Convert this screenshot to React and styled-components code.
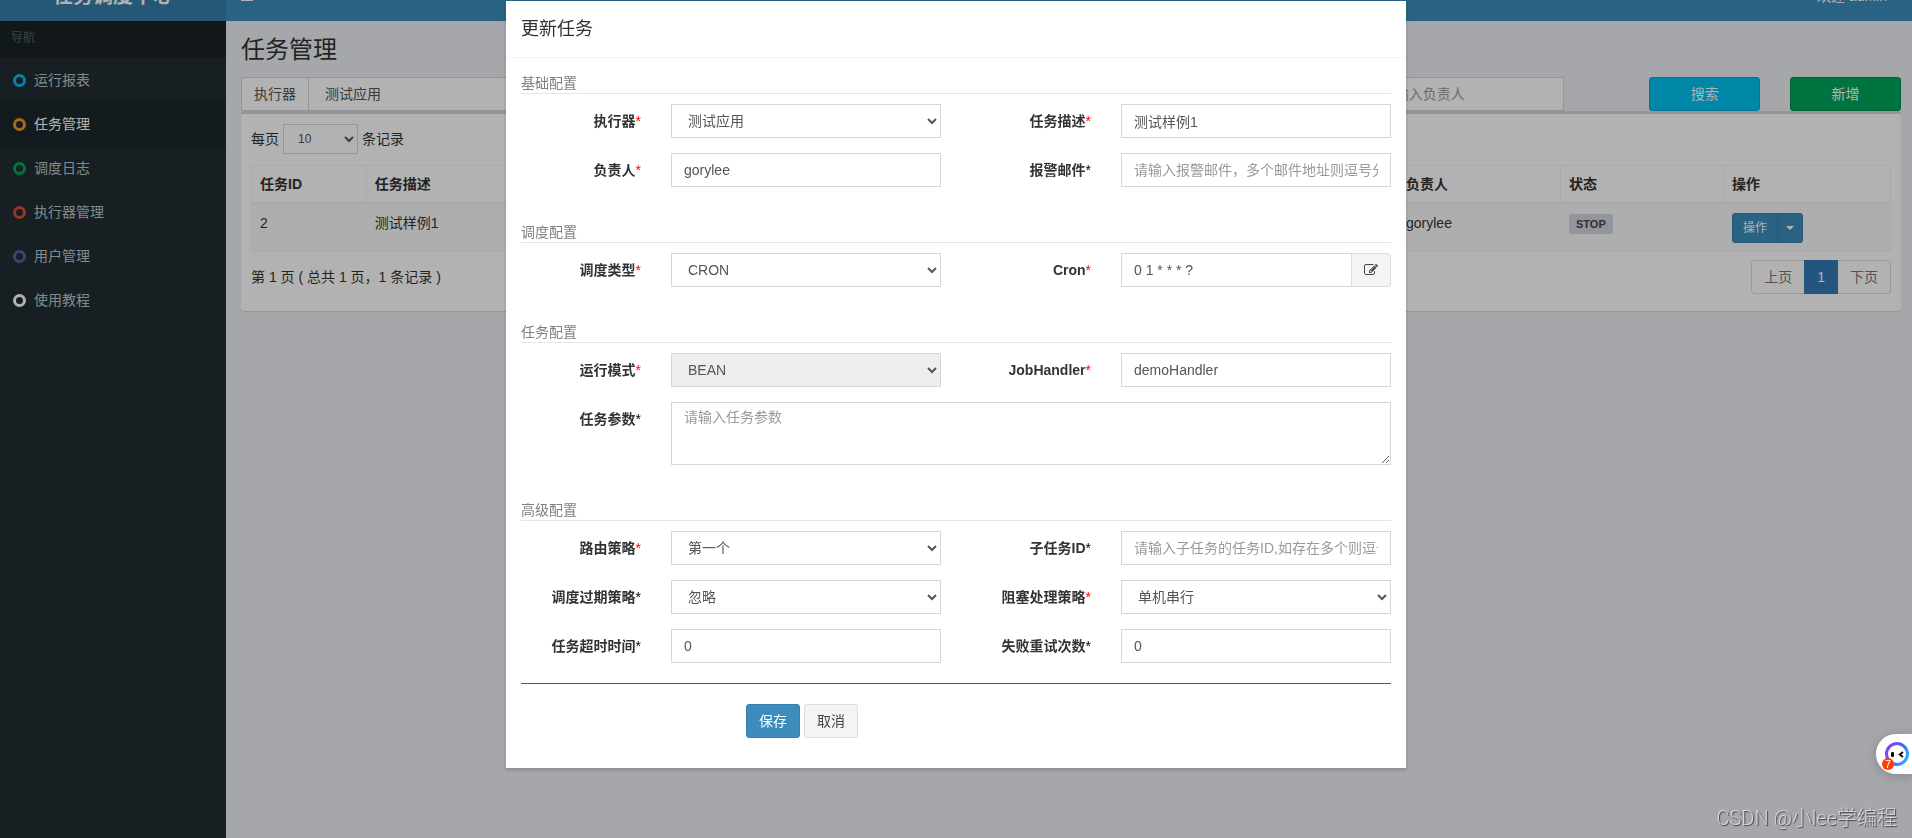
/**
*
* JobInfo
*
*/

import React from 'react';
import styled, { createGlobalStyle } from 'styled-components';

const GlobalStyle = createGlobalStyle`
  *, *::before, *::after {
    box-sizing: border-box;
  }

  body {
    margin: 0;
    color: #333;
    background: #ecf0f5;
    font-family: "Liberation Sans", "Noto Sans CJK SC", sans-serif;
    font-size: 14px;
    line-height: 20px;
  }

  button, input, select, textarea {
    font: inherit;
  }
`;

const Page = styled.div`
  display: flex;
  flex-direction: column;
  min-height: 100vh;
`;

const Header = styled.header`
  display: flex;
  align-items: flex-end;
  height: 21px;
  overflow: hidden;
  background: #3c8dbc;
  color: #fff;
`;

const Logo = styled.a`
  width: 226px;
  background: #367fa9;
  color: #fff;
  font-size: 20px;
  font-weight: bold;
  line-height: 50px;
  text-align: center;
  text-decoration: none;
`;

const Navbar = styled.div`
  display: flex;
  flex: 1;
  align-items: center;
  justify-content: space-between;
  height: 50px;
  padding: 0 25px 0 15px;
`;

const MenuToggle = styled.button`
  display: flex;
  padding: 0;
  border: 0;
  background: none;
  color: #fff;
`;

const Body = styled.div`
  display: flex;
  flex: 1;
`;

const Sidebar = styled.aside`
  width: 226px;
  background: #222d32;
`;

const NavTitle = styled.div`
  padding: 9px 11px 12px;
  background: #1a2226;
  color: #4b646f;
  font-size: 12px;
  line-height: 16px;
`;

const NavItem = styled.a`
  display: flex;
  align-items: center;
  gap: 8px;
  height: 44px;
  padding: 0 13px;
  background: ${(props) => (props.$active ? '#1e282c' : 'transparent')};
  color: ${(props) => (props.$active ? '#fff' : '#b8c7ce')};
  text-decoration: none;
`;

const Ring = styled.i`
  width: 13px;
  height: 13px;
  border: 3px solid ${(props) => props.$color};
  border-radius: 50%;
`;

const Content = styled.main`
  flex: 1;
  min-width: 0;
  padding: 15px 11px 15px 15px;
`;

const PageTitle = styled.h1`
  margin: 0 0 14px;
  font-size: 24px;
  font-weight: normal;
  line-height: 27px;
`;

const Filters = styled.div`
  display: grid;
  grid-template-columns: repeat(12, minmax(0, 1fr));
  column-gap: 30px;
`;

const FilterCell = styled.div`
  display: flex;
  grid-column: span ${(props) => props.$span};
`;

const Addon = styled.label`
  flex: none;
  padding: 6px 12px;
  border: 1px solid #d2d6de;
  border-right: 0;
  background: #fff;
  color: #555;
`;

const Input = styled.input`
  flex: 1;
  width: 100%;
  min-width: 0;
  max-width: ${(props) => props.$max || 'none'};
  height: 34px;
  padding: 6px 12px;
  border: 1px solid #d2d6de;
  border-radius: 0;
  background: #fff;
  color: #555;
  outline: 0;

  &::placeholder {
    color: #999;
    opacity: 1;
  }
`;

const Select = styled.select`
  width: ${(props) => props.$width || '100%'};
  min-width: 0;
  height: ${(props) => (props.$small ? '30px' : '34px')};
  padding: ${(props) => (props.$small ? '5px 10px' : '6px 12px')};
  border: 1px solid #d2d6de;
  border-radius: 0;
  background: #fff;
  color: #555;
  font-size: ${(props) => (props.$small ? '12px' : '14px')};

  &:disabled {
    background: #eee;
    opacity: 1;
  }
`;

const Textarea = styled.textarea`
  display: block;
  grid-column: span 10;
  width: 100%;
  height: 63px;
  padding: 4px 12px;
  border: 1px solid #d2d6de;
  background: #fff;
  color: #555;
  line-height: 20px;

  &::placeholder {
    color: #999;
    opacity: 1;
  }
`;

const themes = {
  primary: ['#3c8dbc', '#367fa9', '#fff'],
  info: ['#00c0ef', '#00acd6', '#fff'],
  success: ['#00a65a', '#008d4c', '#fff'],
  plain: ['#f4f4f4', '#ddd', '#444'],
};

const Button = styled.button`
  width: ${(props) => (props.$block ? '100%' : 'auto')};
  height: ${(props) => (props.$small ? '30px' : '34px')};
  padding: 0 ${(props) => (props.$small ? '10px' : '12px')};
  border: 1px solid ${(props) => themes[props.$theme][1]};
  border-radius: 3px;
  background: ${(props) => themes[props.$theme][0]};
  color: ${(props) => themes[props.$theme][2]};
  font-size: ${(props) => (props.$small ? '12px' : '14px')};
`;

const ButtonGroup = styled.div`
  display: flex;

  & > :first-child {
    border-top-right-radius: 0;
    border-bottom-right-radius: 0;
  }

  & > :last-child:not(:first-child) {
    margin-left: -1px;
    padding: 0 8px;
    border-top-left-radius: 0;
    border-bottom-left-radius: 0;
  }
`;

const Caret = styled.span`
  display: block;
  border-top: 4px solid #fff;
  border-right: 4px solid transparent;
  border-left: 4px solid transparent;
`;

const Box = styled.section`
  padding: 10px;
  border-top: 3px solid #d2d6de;
  border-radius: 3px;
  background: #fff;
  box-shadow: 0 1px 1px rgba(0, 0, 0, 0.1);
`;

const PageLength = styled.label`
  display: flex;
  align-items: center;
  gap: 4px;
  margin-bottom: 11px;
`;

const Table = styled.table`
  width: 100%;
  border-spacing: 0;
  border: solid #f4f4f4;
  border-width: 1px 0 0 1px;
  table-layout: fixed;

  th, td {
    padding: 8px;
    border: solid #f4f4f4;
    border-width: 0 1px 1px 0;
    text-align: left;
    vertical-align: top;
  }

  th {
    border-bottom-width: 3px;
  }

  td {
    background: #f9f9f9;
  }
`;

const Status = styled.span`
  display: inline-block;
  padding: 0 7px;
  border-radius: 3px;
  background: #d2d6de;
  color: #444;
  font-size: 11px;
  font-weight: bold;
  line-height: 20px;
`;

const BoxFooter = styled.div`
  display: flex;
  justify-content: space-between;
  padding: 8px 0 7px;
  line-height: 34px;
`;

const Pagination = styled.nav`
  display: flex;
`;

const PageLink = styled.a`
  padding: 6px 12px;
  border: 1px solid ${(props) => (props.$active ? '#337ab7' : '#ddd')};
  border-width: ${(props) => (props.$active ? '1px' : props.$edge)};
  border-radius: ${(props) => props.$radius || '0'};
  background: ${(props) => (props.$active ? '#337ab7' : '#fff')};
  color: ${(props) => (props.$active ? '#fff' : '#777')};
  line-height: 20px;
  text-decoration: none;
`;

const Backdrop = styled.div`
  position: fixed;
  inset: 0;
  display: flex;
  align-items: flex-start;
  justify-content: center;
  padding-top: 1px;
  overflow: auto;
  background: rgba(0, 0, 0, 0.3);
`;

const Dialog = styled.div`
  width: 900px;
  max-width: 100%;
  background: #fff;
  box-shadow: 0 2px 4px rgba(0, 0, 0, 0.2);
`;

const DialogTitle = styled.h4`
  margin: 0;
  padding: 15px;
  border-bottom: 1px solid #f4f4f4;
  font-size: 18px;
  font-weight: normal;
  line-height: 26px;
`;

const Form = styled.form`
  display: flex;
  flex-direction: column;
  gap: 35px;
  padding: 15px 15px 30px;
`;

const Section = styled.fieldset`
  display: flex;
  flex-direction: column;
  min-width: 0;
  margin: 0;
  padding: 0;
  border: 0;
`;

const SectionTitle = styled.div`
  margin-bottom: 10px;
  border-bottom: 1px solid #e5e5e5;
  color: #808080;
`;

const Grid = styled.div`
  display: grid;
  grid-template-columns: repeat(12, minmax(0, 1fr));
  gap: 15px 30px;
`;

const Label = styled.label`
  grid-column: span 2;
  padding-top: 7px;
  font-weight: bold;
  text-align: right;
  white-space: nowrap;
`;

const Star = styled.span`
  color: ${(props) => (props.$required ? 'red' : '#000')};
  font-weight: normal;
`;

const Control = styled.div`
  display: flex;
  grid-column: span 4;
`;

const CronButton = styled.button`
  display: flex;
  align-items: center;
  width: 40px;
  height: 34px;
  margin-left: -1px;
  padding: 0 12px;
  border: 1px solid #ddd;
  border-radius: 0 3px 3px 0;
  background: #f4f4f4;
  color: #444;
`;

const Actions = styled.div`
  display: flex;
  gap: 4px;
  grid-column: 4 / -1;
`;

const FormFooter = styled.div`
  margin-top: -15px;
  padding-top: 20px;
  border-top: 1px solid #555;
`;

const Assistant = styled.button`
  position: fixed;
  right: 0;
  bottom: 64px;
  width: 36px;
  height: 40px;
  padding: 0;
  border: 0;
  border-radius: 20px 0 0 20px;
  background: #fff;
  box-shadow: 0 2px 12px rgba(0, 0, 0, 0.2);
`;

const Watermark = styled.div`
  position: fixed;
  right: 15px;
  bottom: 8px;
  color: rgba(255, 255, 255, 0.6);
  font-family: Roboto, "Noto Sans CJK SC", sans-serif;
  font-size: 20px;
  font-weight: 300;
  line-height: 24px;
  text-shadow: 1px 1px 1px rgba(0, 0, 0, 0.6);
`;

const navItems = [
  { text: '运行报表', color: '#00c0ef' },
  { text: '任务管理', color: '#f39c12', active: true },
  { text: '调度日志', color: '#00a65a' },
  { text: '执行器管理', color: '#dd4b39' },
  { text: '用户管理', color: '#605ca8' },
  { text: '使用教程', color: '#fff' },
];

const sections = [
  {
    title: '基础配置',
    fields: [
      { id: 'jobGroup', label: '执行器', required: true, options: ['测试应用'] },
      { id: 'jobDesc', label: '任务描述', required: true, value: '测试样例1' },
      { id: 'author', label: '负责人', required: true, value: 'gorylee' },
      { id: 'alarmEmail', label: '报警邮件', placeholder: '请输入报警邮件，多个邮件地址则逗号分隔' },
    ],
  },
  {
    title: '调度配置',
    fields: [
      { id: 'scheduleType', label: '调度类型', required: true, options: ['CRON'] },
      { id: 'cron', label: 'Cron', required: true, value: '0 1 * * * ?', cron: true },
    ],
  },
  {
    title: '任务配置',
    fields: [
      { id: 'glueType', label: '运行模式', required: true, options: ['BEAN'], disabled: true },
      { id: 'handler', label: 'JobHandler', required: true, value: 'demoHandler' },
      { id: 'param', label: '任务参数', placeholder: '请输入任务参数', multiline: true },
    ],
  },
  {
    title: '高级配置',
    fields: [
      { id: 'route', label: '路由策略', required: true, options: ['第一个'] },
      { id: 'childJobId', label: '子任务ID', placeholder: '请输入子任务的任务ID,如存在多个则逗号分隔' },
      { id: 'misfire', label: '调度过期策略', options: ['忽略'] },
      { id: 'block', label: '阻塞处理策略', required: true, options: ['单机串行'] },
      { id: 'timeout', label: '任务超时时间', value: '0' },
      { id: 'retry', label: '失败重试次数', value: '0' },
    ],
  },
];

function BarsIcon() {
  return (
    <svg width="12" height="12" viewBox="0 0 12 12" fill="currentColor" aria-hidden="true">
      <path d="M0 1h12v2H0zM0 5h12v2H0zM0 9h12v2H0z" />
    </svg>
  );
}

function EditIcon() {
  return (
    <svg width="14" height="14" viewBox="0 0 1792 1792" fill="currentColor" aria-hidden="true">
      <path d="M888 1184l116-116-152-152-116 116v56h96v96h56zm440-720q-16-16-33 1l-350 350q-17 17-1 33t33-1l350-350q17-17 1-33zm80 594v190q0 119-84.5 203.5t-203.5 84.5h-832q-119 0-203.5-84.5t-84.5-203.5v-832q0-119 84.5-203.5t203.5-84.5h832q63 0 117 25 15 7 18 23 3 17-9 29l-49 49q-14 14-32 8-23-6-45-6h-832q-66 0-113 47t-47 113v832q0 66 47 113t113 47h832q66 0 113-47t47-113v-126q0-13 9-22l64-64q15-15 35-7t20 29zm-96-738l288 288-672 672h-288v-288zm444 132l-92 92-288-288 92-92q28-28 68-28t68 28l152 152q28 28 28 68t-28 68z" />
    </svg>
  );
}

function AssistantIcon() {
  return (
    <svg width="36" height="40" viewBox="0 0 36 40" aria-hidden="true">
      <defs>
        <linearGradient id="face" x1="0" y1="0.3" x2="1" y2="0.8">
          <stop offset="0" stopColor="#8a3ff5" />
          <stop offset="0.5" stopColor="#4a5cff" />
          <stop offset="1" stopColor="#2cb4f5" />
        </linearGradient>
      </defs>
      <circle cx="21" cy="20" r="10.5" fill="#fff" stroke="url(#face)" strokeWidth="3" />
      <rect x="15" y="18" width="3" height="5" rx="1" fill="#111" />
      <path d="M27 18l-3.2 2.5L27 23" fill="none" stroke="#111" strokeWidth="2" />
      <circle cx="12" cy="30" r="6" fill="#ff3d00" />
      <text x="12" y="34" fill="#fff" fontSize="11" textAnchor="middle">7</text>
    </svg>
  );
}

function Field({ field }) {
  let control = <Input id={field.id} defaultValue={field.value} placeholder={field.placeholder} />;
  if (field.options) {
    control = (
      <Select id={field.id} disabled={field.disabled}>
        {field.options.map((option) => <option key={option}>{option}</option>)}
      </Select>
    );
  }
  return (
    <>
      <Label htmlFor={field.id}>{field.label}<Star $required={field.required}>*</Star></Label>
      {field.multiline ? (
        <Textarea id={field.id} placeholder={field.placeholder} />
      ) : (
        <Control>
          {control}
          {field.cron && <CronButton type="button" aria-label="Cron"><EditIcon /></CronButton>}
        </Control>
      )}
    </>
  );
}

function JobTable() {
  return (
    <Table>
      <colgroup>
        <col width="7%" />
        <col width="25%" />
        <col width="13%" />
        <col />
        <col width="163" />
        <col width="163" />
        <col width="167" />
      </colgroup>
      <thead>
        <tr>
          <th>任务ID</th>
          <th>任务描述</th>
          <th>调度类型</th>
          <th>运行模式</th>
          <th>负责人</th>
          <th>状态</th>
          <th>操作</th>
        </tr>
      </thead>
      <tbody>
        <tr>
          <td>2</td>
          <td>测试样例1</td>
          <td>CRON</td>
          <td>BEAN</td>
          <td>gorylee</td>
          <td><Status>STOP</Status></td>
          <td>
            <ButtonGroup>
              <Button type="button" $theme="primary" $small>操作</Button>
              <Button type="button" $theme="primary" $small aria-label="操作"><Caret /></Button>
            </ButtonGroup>
          </td>
        </tr>
      </tbody>
    </Table>
  );
}

function UpdateDialog() {
  return (
    <Dialog role="dialog" aria-labelledby="dialogTitle">
      <DialogTitle id="dialogTitle">更新任务</DialogTitle>
      <Form>
        {sections.map((section) => (
          <Section key={section.title}>
            <SectionTitle>{section.title}</SectionTitle>
            <Grid>
              {section.fields.map((field) => <Field key={field.id} field={field} />)}
            </Grid>
          </Section>
        ))}
        <FormFooter>
          <Grid>
            <Actions>
              <Button type="button" $theme="primary">保存</Button>
              <Button type="button" $theme="plain">取消</Button>
            </Actions>
          </Grid>
        </FormFooter>
      </Form>
    </Dialog>
  );
}

export default function App() {
  return (
    <>
      <GlobalStyle />
      <Page>
        <Header>
          <Logo href="#home">任务调度中心</Logo>
          <Navbar>
            <MenuToggle type="button" aria-label="导航"><BarsIcon /></MenuToggle>
            <span>欢迎 admin</span>
          </Navbar>
        </Header>
        <Body>
          <Sidebar>
            <NavTitle>导航</NavTitle>
            {navItems.map((item) => (
              <NavItem key={item.text} href="#nav" $active={item.active}>
                <Ring $color={item.color} />{item.text}
              </NavItem>
            ))}
          </Sidebar>
          <Content>
            <PageTitle>任务管理</PageTitle>
            <Filters>
              <FilterCell $span={3}>
                <Addon htmlFor="filterGroup">执行器</Addon>
                <Select id="filterGroup"><option>测试应用</option></Select>
              </FilterCell>
              <FilterCell $span={1}>
                <Select aria-label="状态"><option>全部</option></Select>
              </FilterCell>
              <FilterCell $span={2}>
                <Input aria-label="任务描述" placeholder="请输入任务描述" $max="196px" />
              </FilterCell>
              <FilterCell $span={2}>
                <Input aria-label="JobHandler" placeholder="请输入JobHandler" $max="196px" />
              </FilterCell>
              <FilterCell $span={2}>
                <Input aria-label="负责人" placeholder="请输入负责人" $max="196px" />
              </FilterCell>
              <FilterCell $span={1}><Button type="button" $theme="info" $block>搜索</Button></FilterCell>
              <FilterCell $span={1}><Button type="button" $theme="success" $block>新增</Button></FilterCell>
            </Filters>
            <Box>
              <PageLength>
                每页
                <Select $small $width="75px"><option>10</option></Select>
                条记录
              </PageLength>
              <JobTable />
              <BoxFooter>
                <span>第 1 页 ( 总共 1 页，1 条记录 )</span>
                <Pagination>
                  <PageLink href="#prev" $edge="1px 0 1px 1px" $radius="4px 0 0 4px">上页</PageLink>
                  <PageLink href="#1" $active>1</PageLink>
                  <PageLink href="#next" $edge="1px 1px 1px 0" $radius="0 4px 4px 0">下页</PageLink>
                </Pagination>
              </BoxFooter>
            </Box>
          </Content>
        </Body>
      </Page>
      <Backdrop>
        <UpdateDialog />
      </Backdrop>
      <Assistant type="button" aria-label="7"><AssistantIcon /></Assistant>
      <Watermark>CSDN @小lee学编程</Watermark>
    </>
  );
}
